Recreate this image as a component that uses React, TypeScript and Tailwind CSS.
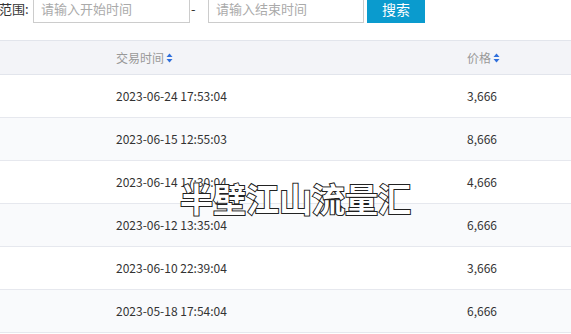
const rows = [
  { time: "2023-06-24 17:53:04", price: "3,666" },
  { time: "2023-06-15 12:55:03", price: "8,666" },
  { time: "2023-06-14 17:30:04", price: "4,666" },
  { time: "2023-06-12 13:35:04", price: "6,666" },
  { time: "2023-06-10 22:39:04", price: "3,666" },
  { time: "2023-05-18 17:54:04", price: "6,666" },
];

function SortIcon() {
  return (
    <svg width="7" height="10" viewBox="0 0 7 10" className="ml-[2px]">
      <path d="M3.5 0.5 L6.5 4 L0.5 4 Z" fill="#2f6fdc" />
      <path d="M3.5 9.5 L6.5 6 L0.5 6 Z" fill="#2f6fdc" />
    </svg>
  );
}

export default function App() {
  return (
    <div className="relative w-[571px] h-[334px] overflow-hidden bg-white font-['Noto_Sans_CJK_SC','Noto_Sans',sans-serif]">
      {/* Search bar */}
      <div className="flex items-center h-[28px] mt-[-5px] ml-[-1px]">
        <span className="text-[13px] text-[#333] w-[34px] shrink-0 whitespace-nowrap">范围:</span>
        <div className="w-[157px] h-[28px] border border-[#cccccc] flex items-center px-[7px] text-[13px] text-[#aaaaaa] whitespace-nowrap">
          请输入开始时间
        </div>
        <span className="w-[18px] pl-[1px] text-[13px] text-[#333]">-</span>
        <div className="w-[156px] h-[28px] border border-[#cccccc] flex items-center px-[7px] text-[13px] text-[#aaaaaa] whitespace-nowrap">
          请输入结束时间
        </div>
        <button className="ml-[3px] w-[58px] h-[28px] bg-[#0a9bce] text-white text-[14px] flex items-center justify-center">
          搜索
        </button>
      </div>

      {/* Table */}
      <div className="mt-[17px]">
        <div className="flex items-center h-[35px] bg-[#f3f4f8] border-y border-[#e2e5ec] text-[12px] text-[#999]">
          <div className="pl-[116px] w-[467px] flex items-center">
            交易时间
            <SortIcon />
          </div>
          <div className="flex items-center">
            价格
            <SortIcon />
          </div>
        </div>

        {rows.map((r, i) => (
          <div
            key={i}
            className={
              "flex items-center h-[43px] border-b border-[#e6e8ee] text-[12px] text-[#333] " +
              (i % 2 === 1 ? "bg-[#f9fafc]" : "bg-white")
            }
          >
            <div className="pl-[116px] w-[467px]">{r.time}</div>
            <div>{r.price}</div>
          </div>
        ))}
      </div>

      {/* Watermark */}
      <div className="absolute left-[180px] top-[182px] text-[33px] font-bold leading-none text-white [-webkit-text-stroke:2px_#222] [paint-order:stroke_fill] whitespace-nowrap">
        半壁江山流量汇
      </div>
    </div>
  );
}
